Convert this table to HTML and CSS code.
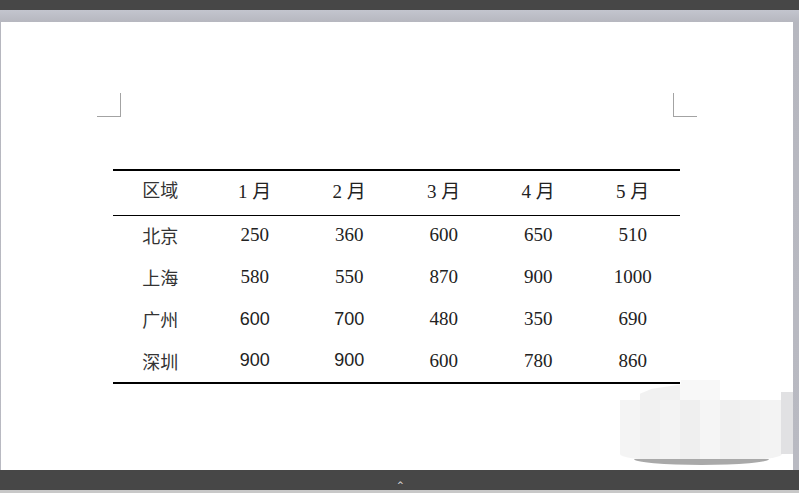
FILE: index.html
```html
<!DOCTYPE html>
<html lang="zh-CN">
<head>
<meta charset="utf-8">
<title>表格</title>
<link rel="stylesheet" href="styles.css">
</head>
<body>
<div class="topbar"></div>
<div class="workspace">
  <div class="page">
    <div class="marks">
      <div class="mark mark-left"></div>
      <div class="mark mark-right"></div>
    </div>
    <table class="data">
      <thead>
        <tr><th class="cjk">区域</th><th>1 月</th><th>2 月</th><th>3 月</th><th>4 月</th><th>5 月</th></tr>
      </thead>
      <tbody>
        <tr><td class="cjk">北京</td><td>250</td><td>360</td><td>600</td><td>650</td><td>510</td></tr>
        <tr><td class="cjk">上海</td><td>580</td><td>550</td><td>870</td><td>900</td><td>1000</td></tr>
        <tr><td class="cjk">广州</td><td class="sans">600</td><td class="sans">700</td><td>480</td><td>350</td><td>690</td></tr>
        <tr><td class="cjk">深圳</td><td class="sans">900</td><td class="sans">900</td><td>600</td><td>780</td><td>860</td></tr>
      </tbody>
    </table>
    <div class="blur">
      <div class="blur-top"></div>
      <div class="blur-body"></div>
      <div class="blur-side"></div>
      <div class="blur-shadow"></div>
    </div>
  </div>
</div>
<div class="bottombar"><span class="caret">^</span></div>
<div class="bottomstrip"></div>
</body>
</html>
```

FILE: styles.css
```css
html, body {
  margin: 0;
  padding: 0;
  width: 799px;
  height: 493px;
  overflow: hidden;
  background: #c4c4c4;
}
body {
  display: flex;
  flex-direction: column;
  font-family: "Liberation Serif", "Noto Sans CJK SC", serif;
}
.topbar {
  height: 10px;
  background: #474747;
  flex: none;
}
.workspace {
  height: 460px;
  flex: none;
  box-sizing: border-box;
  padding: 12px 6px 0 1px;
  background: linear-gradient(#c3c5ce, #b6b7bf 12px, #b9bac2);
  display: flex;
}
.page {
  position: relative;
  width: 792px;
  height: 448px;
  background: #ffffff;
  display: flex;
  flex-direction: column;
}
.marks {
  display: flex;
  justify-content: space-between;
  padding: 0 96px;
  margin-top: 71px;
}
.mark {
  width: 23px;
  height: 23px;
  border-bottom: 1px solid #a3a3a3;
}
.mark-left { border-right: 1px solid #a3a3a3; }
.mark-right { border-left: 1px solid #a3a3a3; }
.data {
  margin-top: 52px;
  margin-left: 112px;
  width: 567px;
  border-collapse: collapse;
  table-layout: fixed;
  border-top: 2px solid #000;
  border-bottom: 2px solid #000;
  color: #222222;
  font-size: 19px;
}
.data th, .data td {
  text-align: center;
  font-weight: normal;
  padding: 0;
}
.data thead tr {
  height: 45px;
  border-bottom: 1px solid #000;
}
.data thead th { padding-bottom: 7px; }
.data tbody tr { height: 42px; }
.data tbody td { padding-bottom: 2px; }
.cjk {
  font-family: "Noto Sans CJK SC", sans-serif;
  font-size: 18px;
  color: #333333;
}
.sans {
  font-family: "Liberation Sans", sans-serif;
  font-size: 18px;
}
.blur {
  position: absolute;
  left: 619px;
  top: 355px;
  width: 173px;
  height: 92px;
}
.blur-top {
  position: absolute;
  left: 0;
  top: 3px;
  width: 160px;
  height: 22px;
  background: linear-gradient(90deg, #ffffff 0 20px, #f1f1f1 20px 60px, #f8f8f8 60px 100px, #ffffff 100px);
  clip-path: polygon(0 100%, 20% 40%, 38% 20%, 38% 0, 75% 0, 75% 100%);
}
.blur-body {
  position: absolute;
  left: 0;
  top: 23px;
  width: 162px;
  height: 60px;
  background:
    linear-gradient(90deg, #f4f4f4 0 20px, #f1f1f1 20px 40px, #f3f3f3 40px 60px, #efefef 60px 80px, #f5f5f5 80px 100px, #f0f0f0 100px 120px, #f2f2f2 120px 140px, #f3f3f3 140px);
  border-radius: 0 0 40px 40px / 0 0 6px 6px;
}
.blur-side {
  position: absolute;
  left: 161px;
  top: 15px;
  width: 12px;
  height: 62px;
  background: #e1e1e3;
}
.blur-shadow {
  position: absolute;
  left: 14px;
  top: 82px;
  width: 135px;
  height: 6px;
  background: #a9a9a9;
  border-radius: 0 0 50% 50% / 0 0 100% 100%;
}
.bottombar {
  height: 20px;
  flex: none;
  background: #474747;
  position: relative;
}
.caret {
  position: absolute;
  left: 397px;
  top: 12px;
  font-family: "DejaVu Sans", sans-serif;
  font-size: 8px;
  color: #eeeeee;
  line-height: 8px;
}
.bottomstrip {
  height: 3px;
  flex: none;
  background: #c8c8c8;
}
```
